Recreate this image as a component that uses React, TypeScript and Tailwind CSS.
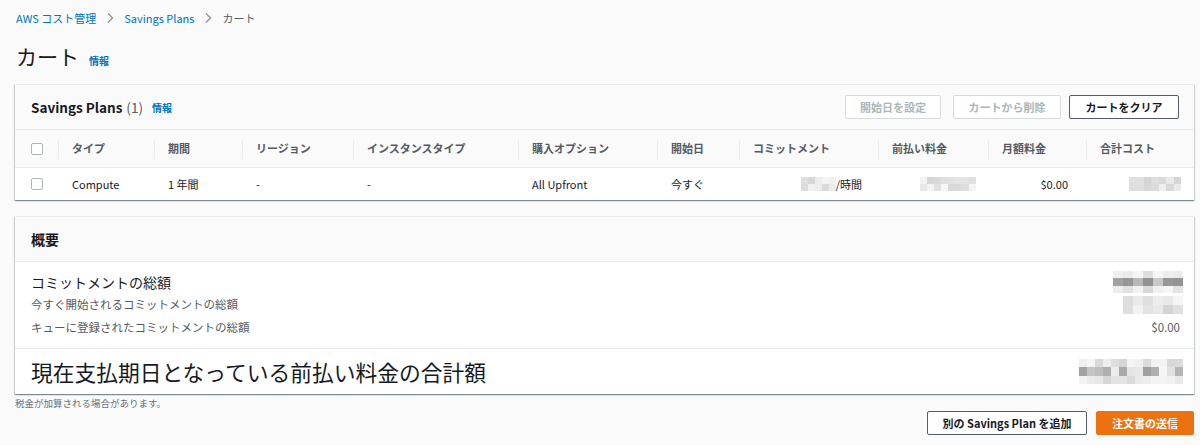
import React from "react";

const FONT = { fontFamily: '"Noto Sans CJK JP", "Noto Sans", sans-serif' };

function Mosaic({ cols, rows, cw, ch, seed, dark = 0.6 }: { cols: number; rows: number; cw: number; ch: number; seed: number; dark?: number }) {
  let s = seed;
  const rnd = () => {
    s = (s * 9301 + 49297) % 233280;
    return s / 233280;
  };
  const cells: string[] = [];
  for (let r = 0; r < rows; r++) {
    for (let c = 0; c < cols; c++) {
      const v = rnd();
      const base = r === 0 || r === rows - 1 ? 0.35 : 1;
      const g = Math.round(248 - v * 110 * dark * base * 1.6);
      cells.push(`rgb(${g},${g},${g})`);
    }
  }
  return (
    <div
      className="grid shrink-0"
      style={{ gridTemplateColumns: `repeat(${cols}, ${cw}px)`, gridTemplateRows: `repeat(${rows}, ${ch}px)` }}
    >
      {cells.map((c, i) => (
        <div key={i} style={{ background: c }} />
      ))}
    </div>
  );
}

function Chevron() {
  return (
    <svg width="14" height="14" viewBox="0 0 14 14" className="mx-[7px]">
      <path d="M5 2.5 L9.5 7 L5 11.5" fill="none" stroke="#879596" strokeWidth="1.3" />
    </svg>
  );
}

function Checkbox() {
  return <div className="w-[12px] h-[12px] border border-[#aab7b8] rounded-[2px] bg-white" />;
}

const cols = [
  { w: 43, label: "" },
  { w: 96, label: "タイプ" },
  { w: 88, label: "期間" },
  { w: 111, label: "リージョン" },
  { w: 165, label: "インスタンスタイプ" },
  { w: 139, label: "購入オプション" },
  { w: 82, label: "開始日" },
  { w: 139, label: "コミットメント" },
  { w: 110, label: "前払い料金" },
  { w: 98, label: "月額料金" },
  { w: 108, label: "合計コスト" },
];

const panelShadow =
  "shadow-[0_1px_1px_0_rgba(0,28,36,0.3),1px_1px_1px_0_rgba(0,28,36,0.15),-1px_1px_1px_0_rgba(0,28,36,0.15)]";

export default function App() {
  return (
    <div style={FONT} className="w-[1200px] h-[445px] bg-[#fafafa] pl-[15px] pr-[6px] text-[#16191f] overflow-hidden">
      {/* breadcrumb */}
      <div className="flex items-center h-[18px] mt-[9px] pl-[1px] text-[11px]">
        <span className="text-[#0073bb]">AWS コスト管理</span>
        <Chevron />
        <span className="text-[#0073bb]">Savings Plans</span>
        <Chevron />
        <span className="text-[#545b64]">カート</span>
      </div>

      {/* title */}
      <div className="flex items-center h-[30px] mt-[14px] pl-[1px]">
        <h1 className="text-[21px] leading-[30px] font-normal">カート</h1>
        <span className="ml-[10px] self-end mb-[3px] text-[10px] leading-[14px] font-bold text-[#0073bb]">情報</span>
      </div>

      {/* panel 1 */}
      <div className={`mt-[13px] bg-white border-t border-[#eaeded] ${panelShadow}`}>
        <div className="h-[45px] bg-[#fafafa] flex items-center pl-[16px] pr-[15px] border-b border-[#eaeded]">
          <div className="flex items-center">
            <span className="text-[13.5px] font-bold">Savings Plans</span>
            <span className="text-[13.5px] text-[#545b64] ml-[4px]">(1)</span>
            <span className="ml-[9px] text-[10px] font-bold text-[#0073bb]">情報</span>
          </div>
          <div className="ml-auto flex items-center">
            <button className="w-[96px] h-[24px] border border-[#d5dbdb] bg-white text-[11px] font-bold text-[#aab7b8] rounded-[2px]">開始日を設定</button>
            <button className="ml-[12px] w-[108px] h-[24px] border border-[#d5dbdb] bg-white text-[11px] font-bold text-[#aab7b8] rounded-[2px]">カートから削除</button>
            <button className="ml-[8px] w-[110px] h-[24px] border border-[#545b64] bg-white text-[11px] font-bold text-[#16191f] rounded-[2px]">カートをクリア</button>
          </div>
        </div>
        {/* header row */}
        <div className="flex h-[38px] bg-[#fafafa] border-b border-[#eaeded]">
          {cols.map((c, i) => (
            <div key={i} className="relative flex items-center" style={{ width: c.w }}>
              {i > 0 && <div className="absolute left-0 top-[10px] h-[19px] w-px bg-[#eaeded]" />}
              {i === 0 ? (
                <div className="pl-[16px]"><Checkbox /></div>
              ) : (
                <span className="pl-[14px] text-[11px] font-bold text-[#545b64]">{c.label}</span>
              )}
            </div>
          ))}
        </div>
        {/* data row */}
        <div className="flex h-[32px] items-center text-[11px]">
          <div className="pl-[16px]" style={{ width: 43 }}><Checkbox /></div>
          <div className="pl-[14px]" style={{ width: 96 }}>Compute</div>
          <div className="pl-[14px]" style={{ width: 88 }}>1 年間</div>
          <div className="pl-[14px]" style={{ width: 111 }}>-</div>
          <div className="pl-[14px]" style={{ width: 165 }}>-</div>
          <div className="pl-[14px]" style={{ width: 139 }}>All Upfront</div>
          <div className="pl-[14px]" style={{ width: 82 }}>今すぐ</div>
          <div className="flex items-center justify-end pr-[16px]" style={{ width: 139 }}>
            <Mosaic cols={5} rows={2} cw={7} ch={7} seed={11} />
            <span>/時間</span>
          </div>
          <div className="flex justify-end pr-[12px]" style={{ width: 110 }}>
            <Mosaic cols={8} rows={2} cw={7} ch={7} seed={23} />
          </div>
          <div className="flex justify-end pr-[18px]" style={{ width: 98 }}>$0.00</div>
          <div className="flex justify-end pr-[13px]" style={{ width: 108 }}>
            <Mosaic cols={7} rows={2} cw={7.5} ch={7} seed={37} />
          </div>
        </div>
      </div>

      {/* panel 2 */}
      <div className={`mt-[16px] bg-white border-t border-[#eaeded] ${panelShadow}`}>
        <div className="h-[45px] bg-[#fafafa] flex items-center pl-[16px] border-b border-[#eaeded]">
          <span className="text-[14px] font-bold">概要</span>
        </div>
        <div className="pt-[9px] pb-[9px] pl-[16px] pr-[11px] border-b border-[#eaeded]">
          <div className="flex items-center justify-between h-[22px]">
            <span className="text-[14px]">コミットメントの総額</span>
            <Mosaic cols={7} rows={3} cw={10} ch={7.5} seed={51} />
          </div>
          <div className="flex items-center justify-between h-[23px]">
            <span className="text-[11.5px] text-[#545b64]">今すぐ開始されるコミットメントの総額</span>
            <Mosaic cols={6} rows={2} cw={10} ch={9} seed={63} />
          </div>
          <div className="flex items-center justify-between h-[23px]">
            <span className="text-[11.5px] text-[#545b64]">キューに登録されたコミットメントの総額</span>
            <span className="text-[11.5px] text-[#545b64] pr-[3px]">$0.00</span>
          </div>
        </div>
        <div className="h-[45px] flex items-center justify-between pl-[16px] pr-[11px]">
          <span className="text-[21.75px] leading-[30px]">現在支払期日となっている前払い料金の合計額</span>
          <Mosaic cols={13} rows={3} cw={8} ch={8.5} seed={77} />
        </div>
      </div>

      {/* footer */}
      <div className="mt-[2px] text-[9.5px] text-[#687078] leading-[14px]">税金が加算される場合があります。</div>
      <div className="flex justify-end mt-[1px] pr-[0px]">
        <button className="w-[160px] h-[24px] border border-[#545b64] bg-white rounded-[2px] text-[11px] font-bold text-[#16191f]">別の Savings Plan を追加</button>
        <button className="ml-[9px] w-[98px] h-[24px] bg-[#ec7211] border border-[#ec7211] rounded-[2px] text-[11px] font-bold text-white">注文書の送信</button>
      </div>
    </div>
  );
}
